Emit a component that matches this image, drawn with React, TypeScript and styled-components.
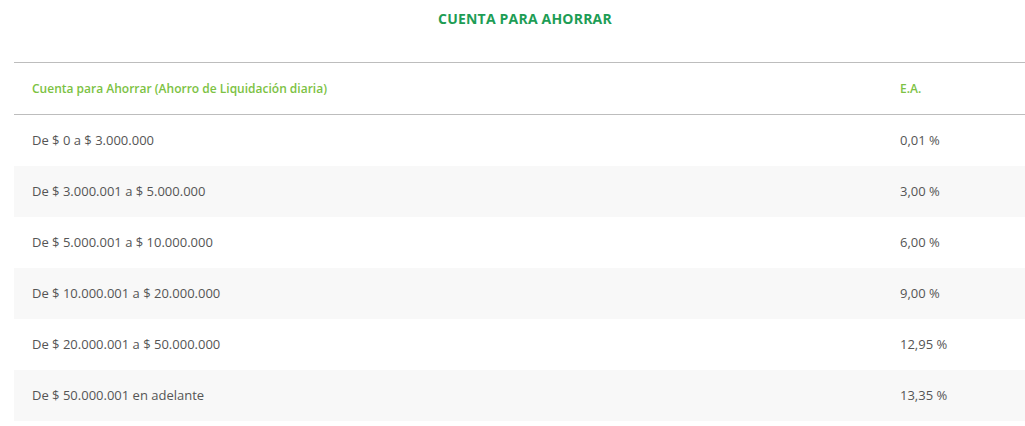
import styled, { createGlobalStyle } from 'styled-components'

const rates = [
  { range: 'De $ 0 a $ 3.000.000', rate: '0,01 %' },
  { range: 'De $ 3.000.001 a $ 5.000.000', rate: '3,00 %' },
  { range: 'De $ 5.000.001 a $ 10.000.000', rate: '6,00 %' },
  { range: 'De $ 10.000.001 a $ 20.000.000', rate: '9,00 %' },
  { range: 'De $ 20.000.001 a $ 50.000.000', rate: '12,95 %' },
  { range: 'De $ 50.000.001 en adelante', rate: '13,35 %' }
]

export default function App() {
  return (
    <>
      <GlobalStyle />
      <Page>
        <Title>Cuenta para Ahorrar</Title>
        <RatesTable>
          <colgroup>
            <RangeCol />
            <col />
          </colgroup>
          <thead>
            <tr>
              <HeadCell>Cuenta para Ahorrar (Ahorro de Liquidación diaria)</HeadCell>
              <HeadCell>E.A.</HeadCell>
            </tr>
          </thead>
          <tbody>
            {rates.map((row) => (
              <Row key={row.range}>
                <Cell>{row.range}</Cell>
                <Cell>{row.rate}</Cell>
              </Row>
            ))}
          </tbody>
        </RatesTable>
      </Page>
    </>
  )
}

const GlobalStyle = createGlobalStyle`
  * {
    box-sizing: border-box;
  }

  html, body {
    margin: 0;
    overflow: hidden;
    background: #ffffff;
  }

  body {
    font-family: "Open Sans", "Liberation Sans", sans-serif;
    color: #555555;
  }
`

const Page = styled.div`
  width: 1022px;
  margin-left: 14px;
  padding-top: 10px;
`

const Title = styled.h2`
  margin: 0 0 35px;
  height: 17px;
  text-align: center;
  text-transform: uppercase;
  color: #1d9d55;
  font-size: 14px;
  font-weight: 700;
  line-height: 17px;
  letter-spacing: 0.2px;
`

const RatesTable = styled.table`
  width: 100%;
  table-layout: fixed;
  border-collapse: collapse;
  border-top: 1px solid #bdbdbd;
`

const RangeCol = styled.col`
  width: 868px;
`

const HeadCell = styled.th`
  height: 52px;
  padding: 0 0 0 18px;
  text-align: left;
  color: #7cc243;
  font-size: 12px;
  font-weight: 600;
  border-bottom: 1px solid #bdbdbd;
`

const Row = styled.tr`
  &:nth-child(even) {
    background: #f8f8f8;
  }
`

const Cell = styled.td`
  height: 51px;
  padding: 0 0 0 18px;
  color: #555555;
  font-size: 13px;
`
